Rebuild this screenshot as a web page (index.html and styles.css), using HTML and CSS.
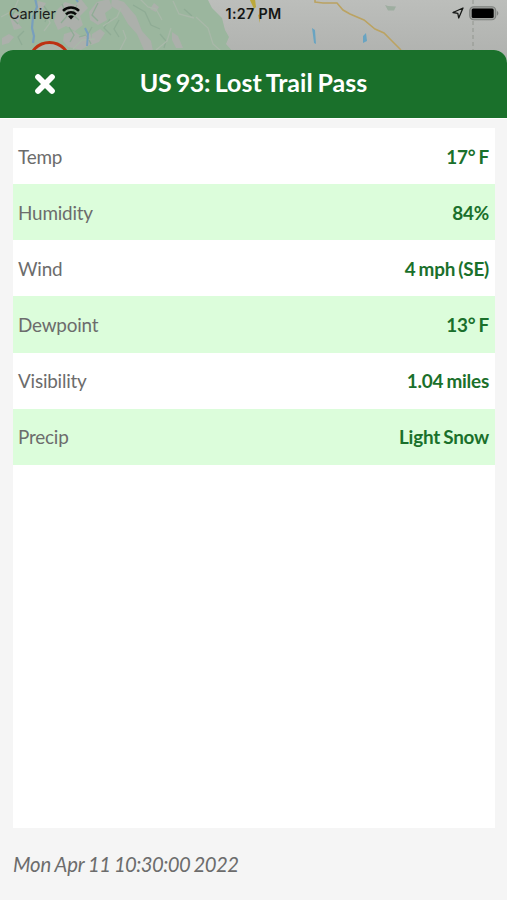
FILE: index.html
```html
<!DOCTYPE html>
<html lang="en">
<head>
<meta charset="utf-8">
<meta name="viewport" content="width=device-width, initial-scale=1">
<title>US 93: Lost Trail Pass</title>
<link rel="stylesheet" href="styles.css">
</head>
<body>
<div class="screen">
  <svg class="map" viewBox="0 0 507 70" aria-hidden="true">
    <defs>
      <linearGradient id="land" x1="0" y1="0" x2="0" y2="1">
        <stop offset="0" stop-color="#bcbebb"/>
        <stop offset="1" stop-color="#adafac"/>
      </linearGradient>
      <filter id="soft"><feGaussianBlur stdDeviation="0.7"/></filter>
    </defs>
    <rect width="507" height="70" fill="url(#land)"/>
    <g filter="url(#soft)">
      <path fill="#9bb69e" d="M-4-4H206L212 8 222 18 225 30 229 37 226 44 235 54V74H-4Z"/>
      <g fill="#acb0ab">
        <path d="M57 10l8-8 10 3 6-6 7 9-8 8 3 9-8 6-9-5-8 4-4-9z"/>
        <path d="M64 34l10-3 8 6 8-4 3 10-12 7-13-3-5-6z"/>
        <path d="M89 12l8-10 12-3 3 9-7 5 2 7-9 5-8-5z"/>
        <path d="M112-2l12 4 12 14 6 15 9 10 2 10-9-1-7-16-9-10-7-12-10-6z"/>
        <path d="M10 18l5-5 6 2-3 8 4 5-8 2zM38 1l8 2-4 8-6-3zM2 38l7-4 5 3-5 6-7 2zM92 34l8-5 5 4-6 9-8 3zM172 32l6 4 5 12h-7l-4-8zM154 3l5 4-3 5-6-3z"/>
      </g>
      <g fill="none" stroke="#8fac95" stroke-width="1.3">
        <path d="M44 6l5 7-4 9M62 4l5 12-6 7M77 5l-5 9 7 6M69 27l5 8-4 7M98 3l-6 12 6 6M92 27l-5 9 4 8M110 19l-6 9 7 7M16 9l-5 8 7 7M133 5l12 7 6 13 9 4M119 20l-5 9 5 8M160 34l6 7-2 7M184 9l8 7M79 37l7-2M24 31l-6 6 4 8"/>
      </g>
      <g fill="none" stroke="#a9b8a9" stroke-width="1.3">
        <path d="M1 17l13-7 5-12M44 31l6-8-3-8M103 26l14-9 4-9M139-2l9 9 8 2 6 11M173 1l6 13 15 4M196 17l12 11 5 16 8 7M156 50l11-9 4-13M73 49l9-9 13-1M120 50l6-12-3-8"/>
      </g>
      <g fill="none" stroke="#789fbd">
        <path stroke-width="2.2" d="M35-2l2 9-4 10-1 11 2 8-1 7"/>
        <path stroke-width="2" d="M75-2l3 4M85 28l3 6-1 12"/>
      </g>
      <path fill="#69a4c2" d="M312 28l3 2 1 14-2-1-1-8zM363 36l3-3 1 8-4 2z"/>
      <path fill="#9eaea0" d="M385 5l3 1 8 .5-2 4h-6z"/>
      <path fill="#bba83e" d="M249-2l6 1 1 8-2 2zM258 15l2-1v9z"/>
      <path fill="none" stroke="#bba362" stroke-width="1.6" d="M315-2v4l8 1h14l6 7 7 4 14 6 11 9 9 4 8 8 9 9"/>
      <path fill="none" stroke="#92968f" stroke-width="1" stroke-dasharray="4 3" d="M473 0v51"/>
    </g>
    <circle cx="49.500" cy="63" r="20.500" fill="#adb4a9" stroke="#bd3011" stroke-width="3"/>
  </svg>

  <header class="status">
    <div class="carrier">
      <span>Carrier</span>
      <svg class="wifi" viewBox="0 0 18 14" aria-hidden="true">
        <g fill="none" stroke="#080a08" stroke-width="2.500">
          <path d="M1 4.900a11.400 11.400 0 0 1 16 0"/>
          <path d="M4 8.300a7.200 7.200 0 0 1 10 0"/>
        </g>
        <path fill="#080a08" d="M9 13.600l-2.900-3a4.200 4.200 0 0 1 5.800 0z"/>
      </svg>
    </div>
    <span class="clock">1:27 PM</span>
    <div class="power">
      <svg class="location" viewBox="0 0 12 12" aria-hidden="true">
        <path d="M11 1L6.700 11 5.800 6.400 1 5.500Z" fill="none" stroke="#161816" stroke-width="1.300" stroke-linejoin="round"/>
      </svg>
      <svg class="battery" viewBox="0 0 31 15" aria-hidden="true">
        <rect x=".75" y=".75" width="26" height="13" rx="4" fill="#a0a29f" stroke="#7e817e" stroke-width="1.200"/>
        <rect x="2.700" y="2.500" width="22" height="9.500" rx="1.500" fill="#000"/>
        <path d="M28 4.800q2.800 2.500 0 5z" fill="#7e817e"/>
      </svg>
    </div>
  </header>

  <main class="sheet">
    <div class="titlebar">
      <button class="close" aria-label="Close">
        <svg viewBox="0 0 22 22" aria-hidden="true"><path d="M4 4l14 14M18 4L4 18" stroke="#fff" stroke-width="5.700" stroke-linecap="round"/></svg>
      </button>
      <h1><span class="route">US 93:</span> Lost Trail Pass</h1>
    </div>
    <div class="content">
      <dl class="readings">
        <div class="row"><dt>Temp</dt><dd>17° F</dd></div>
        <div class="row"><dt>Humidity</dt><dd>84%</dd></div>
        <div class="row"><dt>Wind</dt><dd>4 mph (SE)</dd></div>
        <div class="row"><dt>Dewpoint</dt><dd>13° F</dd></div>
        <div class="row"><dt>Visibility</dt><dd>1.04 miles</dd></div>
        <div class="row"><dt>Precip</dt><dd>Light Snow</dd></div>
      </dl>
      <time class="updated">Mon Apr <span class="digits">11 10:30:00 2022</span></time>
    </div>
  </main>
</div>
</body>
</html>
```
FILE: styles.css
```css
* { box-sizing: border-box; }

body {
  margin: 0;
  font-family: Lato, sans-serif;
  background: #f5f5f5;
}

.screen {
  display: grid;
  grid-template-columns: 507px;
  grid-template-rows: 50px 850px;
  position: relative;
  width: 507px;
  height: 900px;
  overflow: hidden;
}

.map {
  position: absolute;
  top: 0;
  left: 0;
  width: 507px;
  height: 70px;
}

.status {
  position: relative;
  display: grid;
  grid-template-columns: 1fr auto 1fr;
  align-items: center;
  height: 26px;
  padding: 0 7px 0 9px;
  font-family: Inter, sans-serif;
  font-size: 14.5px;
  color: #1c201c;
}

.carrier { display: flex; align-items: center; gap: 6px; }
.carrier span { letter-spacing: -0.1px; }
.wifi { width: 18px; height: 14px; }
.clock { margin-right: 2px; font-size: 14.3px; font-weight: 600; letter-spacing: 0.3px; color: #141614; }
.power { display: flex; align-items: center; justify-content: flex-end; gap: 5px; }
.location { width: 12px; height: 12px; }
.battery { width: 31px; height: 15px; }

.sheet {
  position: relative;
  display: flex;
  flex-direction: column;
  overflow: hidden;
  border-radius: 13px 13px 0 0;
  background: #f5f5f5;
}

.titlebar {
  display: grid;
  grid-template-columns: 89px 1fr 89px;
  align-items: center;
  height: 68px;
  background: #1a702b;
}

.close {
  justify-self: center;
  width: 22px;
  height: 22px;
  padding: 0;
  border: 0;
  background: none;
}
.close svg { display: block; width: 22px; height: 22px; }

h1 {
  margin: 0;
  padding-bottom: 4px;
  text-align: center;
  color: #fff;
  font-size: 25px;
  font-weight: 700;
  word-spacing: -1.3px;
  white-space: nowrap;
}
.route { letter-spacing: -0.4px; }

.content {
  display: flex;
  flex: 1;
  flex-direction: column;
  padding: 10px 12px 0 13px;
  border-top: 1px solid #fff;
}

.readings {
  height: 700px;
  margin: -1px 0 0;
  background: #fff;
}

.row {
  display: flex;
  align-items: center;
  justify-content: space-between;
  height: 56.15px;
  padding: 0 6px 0 5px;
  font-size: 18.9px;
}
.row:nth-child(even) { background: #dcfddb; }
dt { color: #6c6c6c; letter-spacing: -0.2px; }
dd {
  margin: 0;
  color: #1a702b;
  font-weight: 700;
  letter-spacing: -0.22px;
  word-spacing: -1.2px;
}

.updated {
  margin-top: 24px;
  color: #6c6c6c;
  font-size: 20.3px;
  font-style: italic;
  line-height: 24px;
  letter-spacing: -0.1px;
  word-spacing: -0.8px;
}
.digits { letter-spacing: -0.55px; }
```
